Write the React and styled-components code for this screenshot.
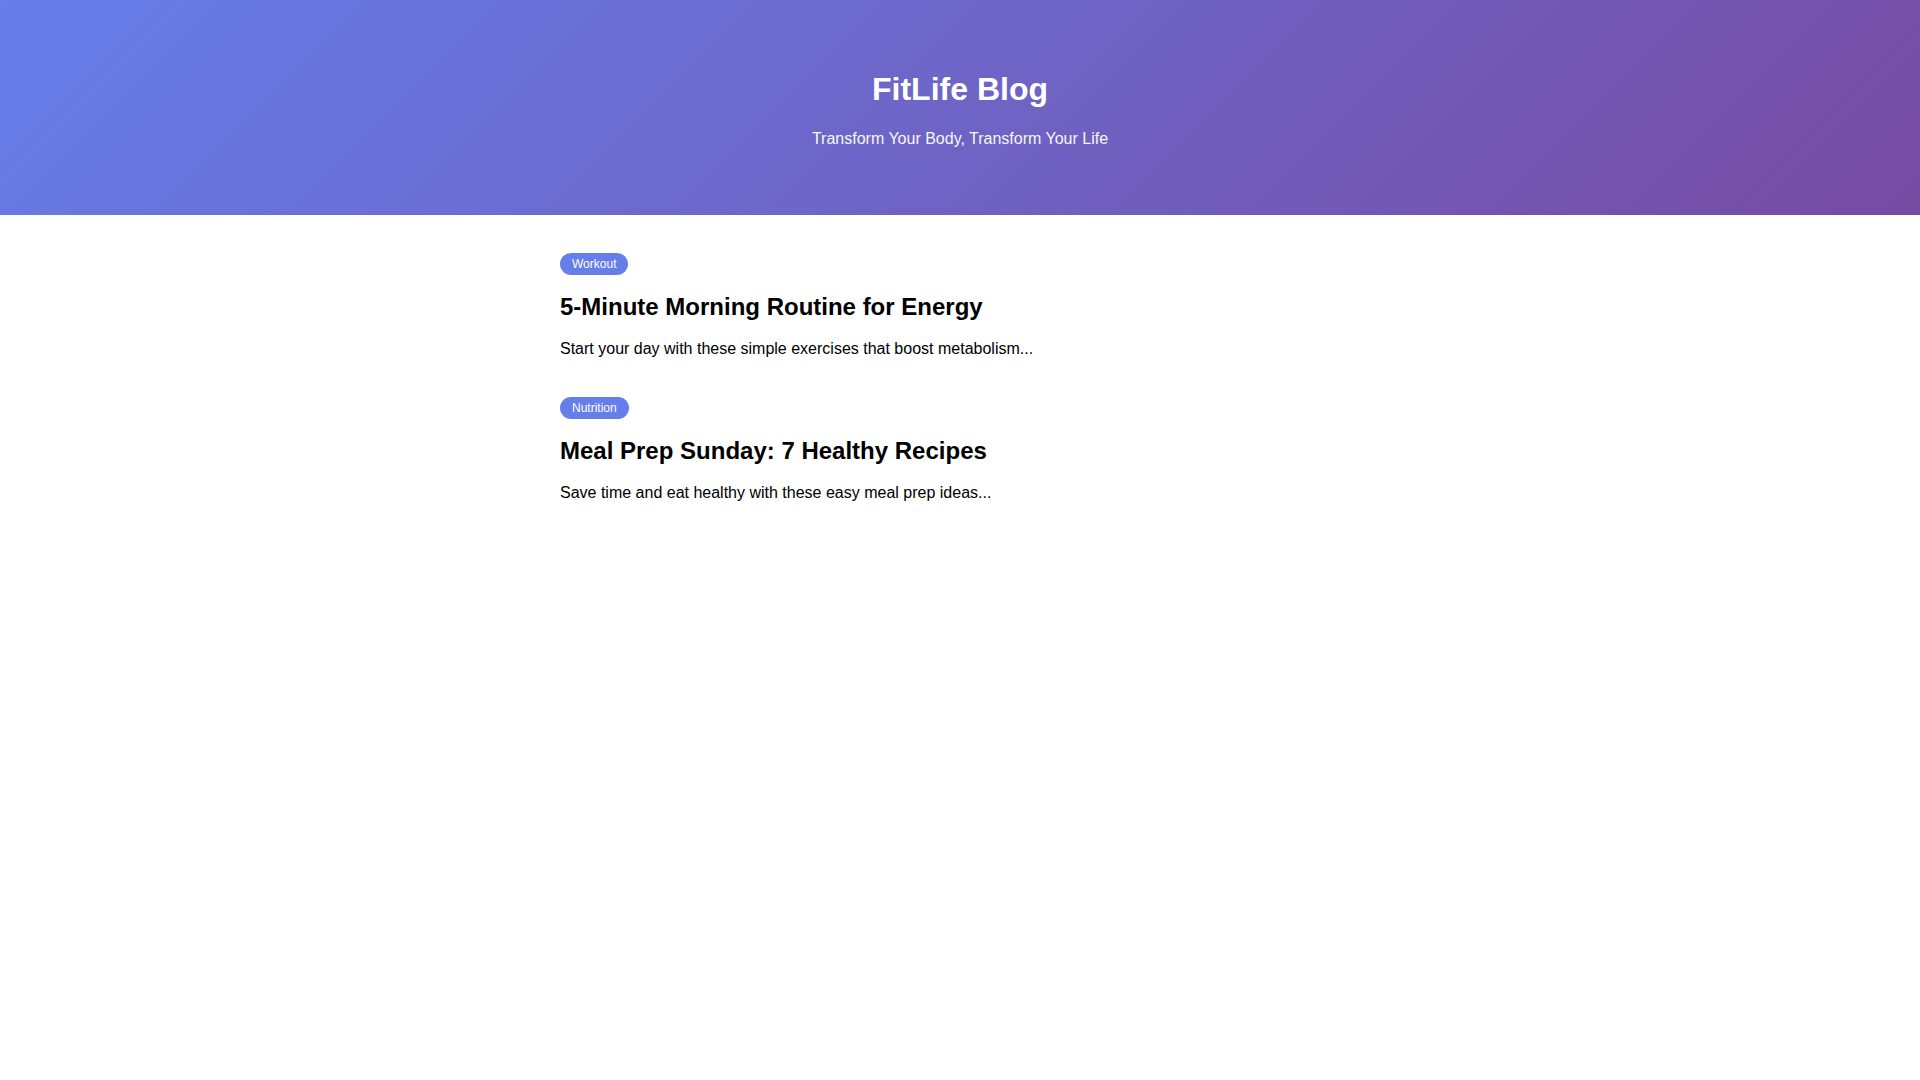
import React from 'react';
import styled, { createGlobalStyle } from 'styled-components';

const GlobalStyle = createGlobalStyle`
  * { box-sizing: border-box; }
  body {
    margin: 0;
    font-family: 'Liberation Sans', Arial, sans-serif;
    background: #fff;
    color: #000;
  }
`;

const Header = styled.header`
	background: linear-gradient(135deg, #667eea 0%, #764ba2 100%);
	color: #fff;
	text-align: center;
	padding: 48px 20px;
`;

const SiteTitle = styled.h1`
	font-size: 32px;
	font-weight: 700;
	margin: 23px 0 22px;
`;

const Tagline = styled.p`
	font-size: 16px;
	margin: 0 0 18.5px;
	opacity: 0.95;
`;

const Main = styled.main`
	max-width: 800px;
	margin: 0 auto;
	padding: 38.5px 0;
`;

const Post = styled.article`
	display: flex;
	flex-direction: column;
	align-items: flex-start;
	margin-bottom: 39px;
`;

const Tag = styled.span`
	display: inline-block;
	background: #667eea;
	color: #fff;
	font-size: 12px;
	line-height: 14px;
	padding: 4px 12px;
	border-radius: 12px;
`;

const PostTitle = styled.h2`
	font-size: 24px;
	font-weight: 700;
	margin: 17.5px 0 19.5px;
`;

const Excerpt = styled.p`
	font-size: 16px;
	margin: 0;
`;

const posts = [
	{
		tag: 'Workout',
		title: '5-Minute Morning Routine for Energy',
		excerpt: 'Start your day with these simple exercises that boost metabolism...',
	},
	{
		tag: 'Nutrition',
		title: 'Meal Prep Sunday: 7 Healthy Recipes',
		excerpt: 'Save time and eat healthy with these easy meal prep ideas...',
	},
];

const App = () => (
	<>
		<GlobalStyle />
		<Header>
			<SiteTitle>FitLife Blog</SiteTitle>
			<Tagline>Transform Your Body, Transform Your Life</Tagline>
		</Header>
		<Main>
			{posts.map((post) => (
				<Post key={post.title}>
					<Tag>{post.tag}</Tag>
					<PostTitle>{post.title}</PostTitle>
					<Excerpt>{post.excerpt}</Excerpt>
				</Post>
			))}
		</Main>
	</>
);

export default App;
